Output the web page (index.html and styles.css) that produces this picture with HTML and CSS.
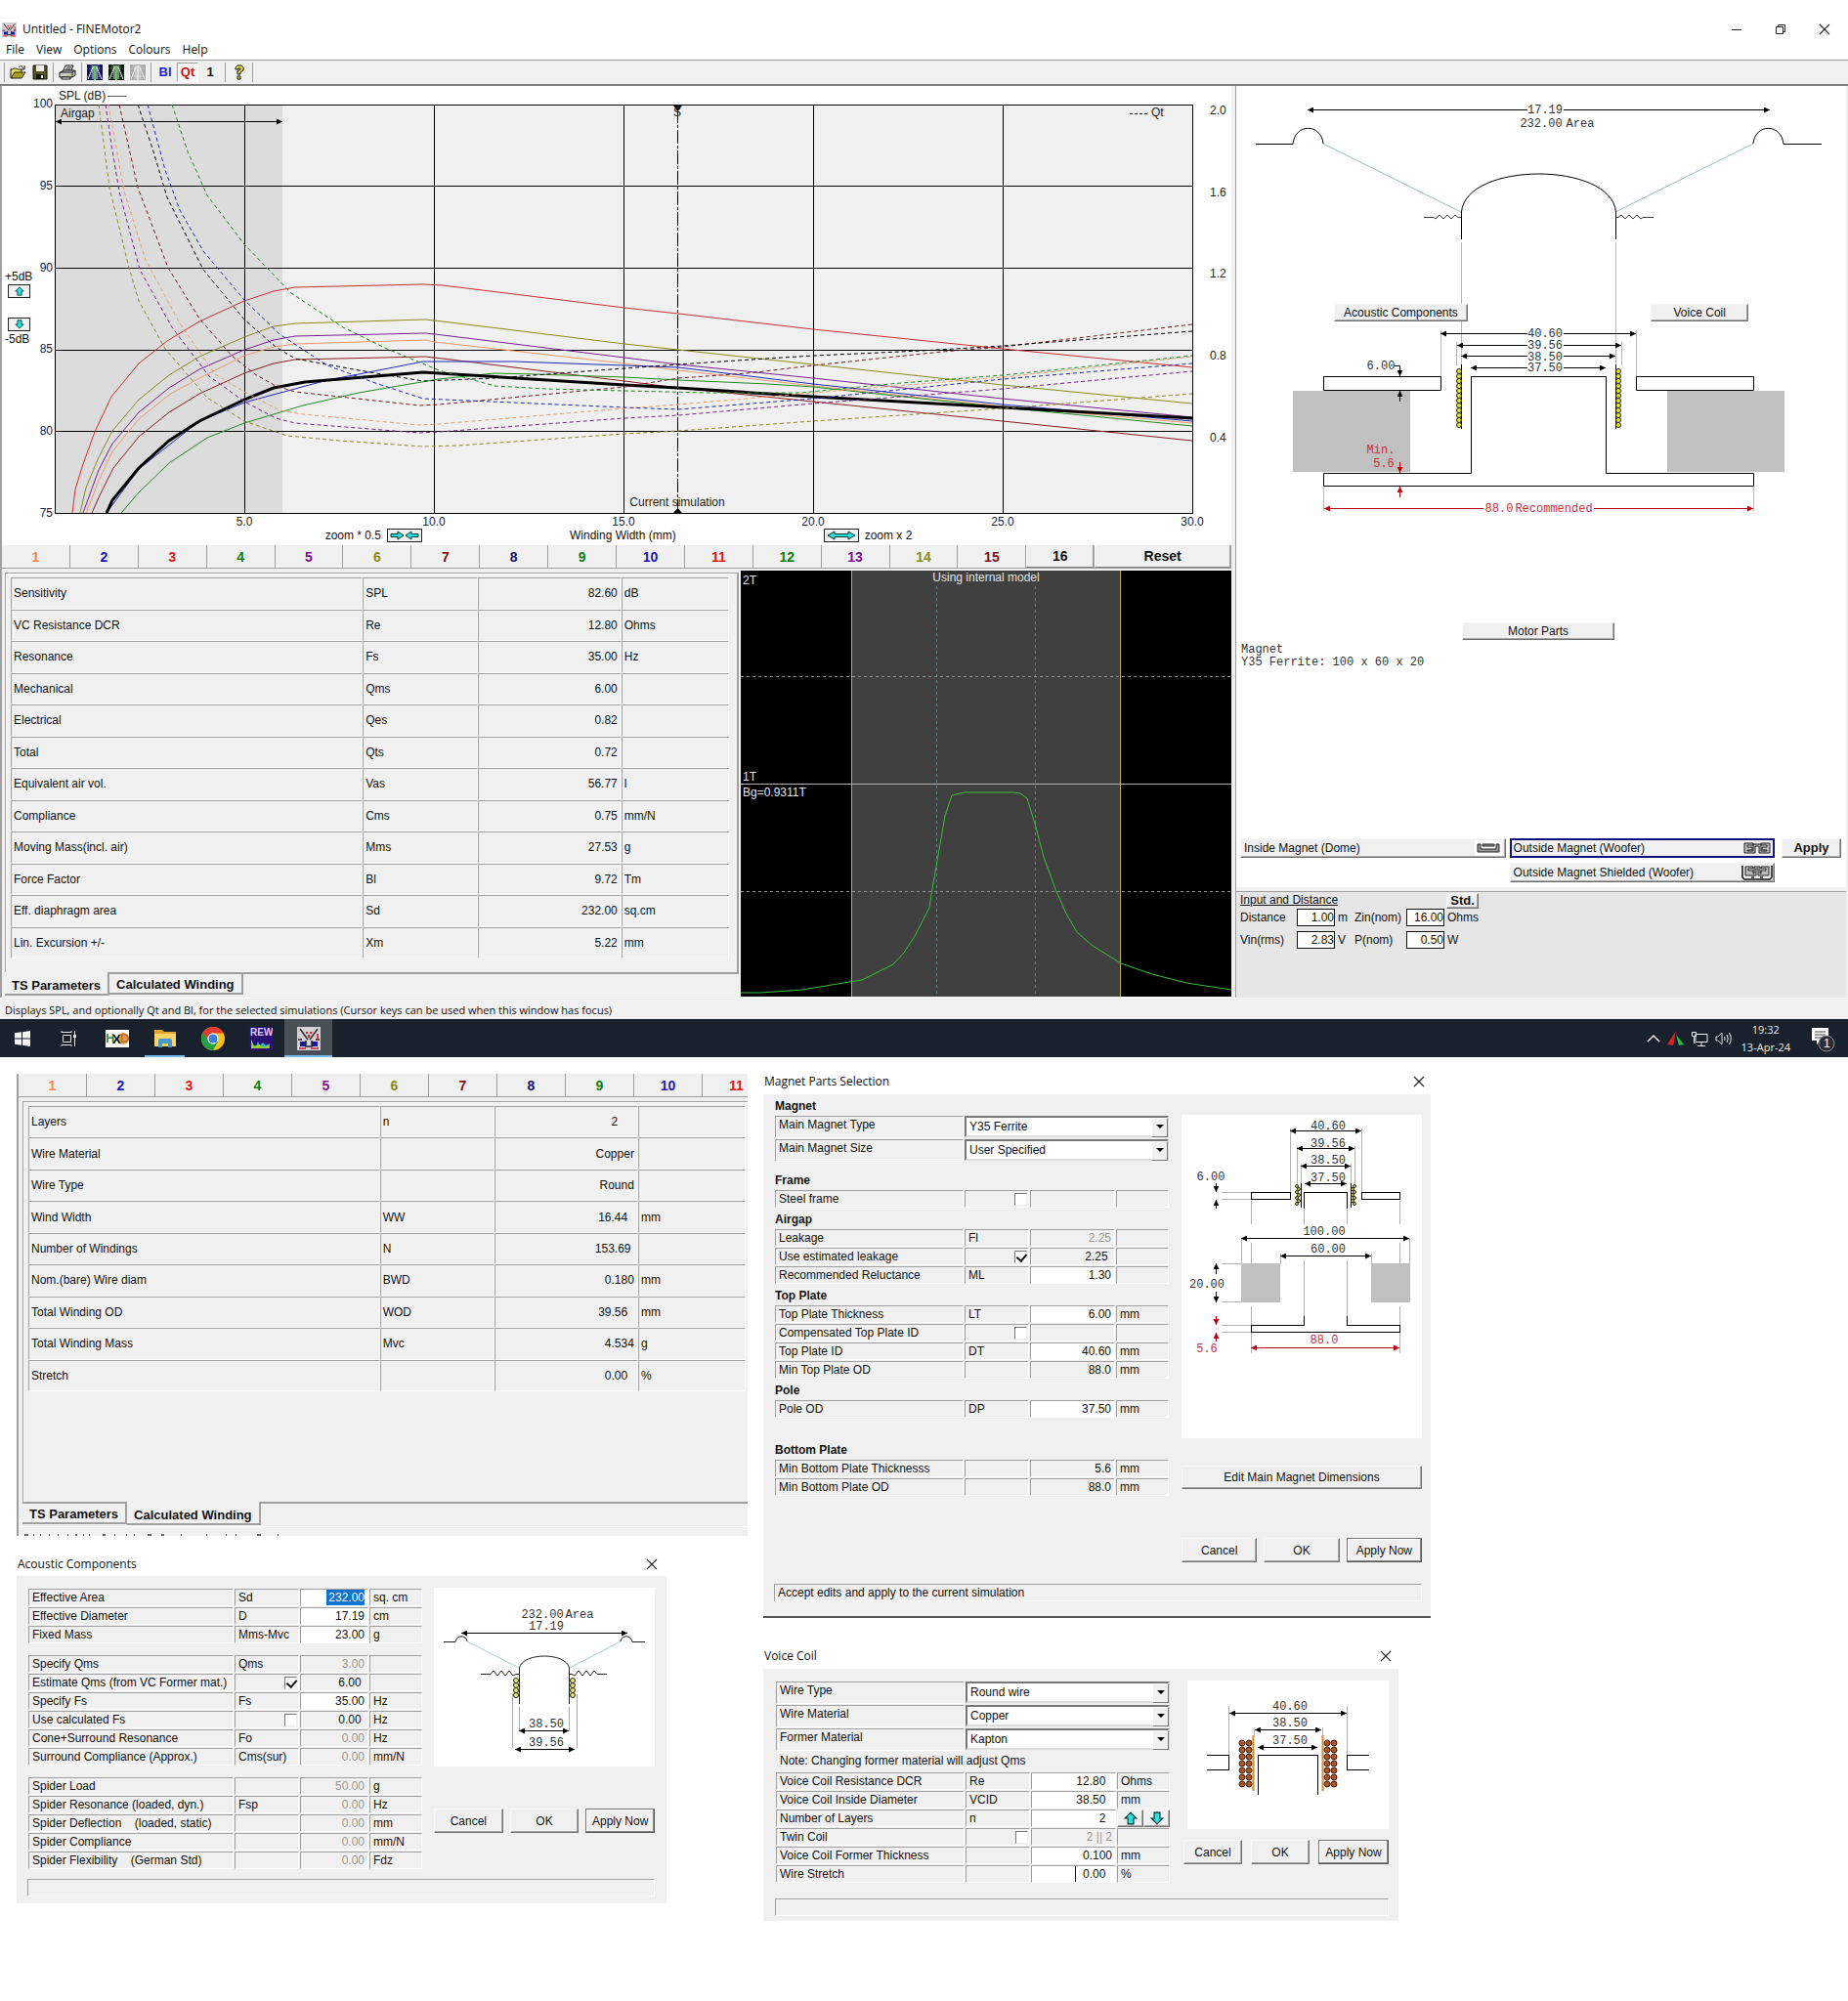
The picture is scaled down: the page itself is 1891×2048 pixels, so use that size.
FILE: index.html
```html
<!DOCTYPE html>
<html lang="en">
<head>
<meta charset="utf-8">
<meta name="viewport" content="width=device-width, initial-scale=1">
<title>Untitled - FINEMotor2</title>
<link rel="stylesheet" href="styles.css">
</head>
<body>

<svg class="defs" width="0" height="0" aria-hidden="true">
  <defs>
    <marker id="head" viewBox="0 0 6 6" refX="6" refY="3" markerWidth="6" markerHeight="6" markerUnits="userSpaceOnUse" orient="auto-start-reverse"><path d="M0 0L6 3L0 6Z" fill="#000"/></marker>
    <marker id="head-red" viewBox="0 0 6 6" refX="6" refY="3" markerWidth="6" markerHeight="6" markerUnits="userSpaceOnUse" orient="auto-start-reverse"><path d="M0 0L6 3L0 6Z" fill="#c00010"/></marker>
    <symbol id="app-icon" viewBox="0 0 24 24">
      <rect width="24" height="24" fill="#d4d0d4"/>
      <path d="M3 2L11 13M21 2L13 13" stroke="#333" stroke-width="1.6" fill="none"/>
      <path d="M9 5h2v2H9zM13 5h2v2h-2zM11 8h2v3h-2z" fill="#d02030"/>
      <path d="M3 15h6v5H3zM15 15h6v5h-6z" fill="#1818a0"/>
      <path d="M1 13h4M19 13h4M9 14V20H15V14" stroke="#223" stroke-width="1.5" fill="none"/>
      <path d="M2 22h7M14 22h8M21 7V14" stroke="#d02030" stroke-width="1.6"/>
    </symbol>
    <symbol id="arrow-up" viewBox="0 0 12 12"><path d="M6 1L11 6H8.500V11H3.500V6H1Z" fill="#28e0e0" stroke="#033" stroke-width="1"/></symbol>
    <symbol id="arrow-down" viewBox="0 0 12 12"><path d="M6 11L11 6H8.500V1H3.500V6H1Z" fill="#28e0e0" stroke="#033" stroke-width="1"/></symbol>
    <symbol id="close" viewBox="0 0 12 12"><path d="M1 1L11 11M11 1L1 11" stroke="#222" stroke-width="1.100" fill="none"/></symbol>
    <symbol id="plot-icon" viewBox="0 0 16 16">
      <path d="M0 4h16M0 12h16M4 0v16M12 0v16" stroke="currentColor" stroke-width="1" stroke-dasharray="1 1" opacity=".7"/>
      <path d="M1 15L3 10L6 3H10L13 10L15 15M6 1V15M10 1V15" stroke="#eee" fill="none"/>
      <path d="M8 1V16" stroke="currentColor" stroke-width="2"/>
    </symbol>
  </defs>
</svg>

<main class="app">
  <header class="titlebar">
    <svg class="app-icon" width="15" height="15" aria-hidden="true"><use href="#app-icon"/></svg>
    <h1>Untitled - FINEMotor2</h1>
    <div class="window-controls">
      <button type="button" aria-label="Minimize"><svg width="12" height="12"><path d="M1 6.500H11" stroke="#222"/></svg></button>
      <button type="button" aria-label="Restore"><svg width="12" height="12"><path d="M1.500 3.500H8.500V10.500H1.500ZM3.500 3.500V1.500H10.500V8.500H8.500" stroke="#222" fill="none"/></svg></button>
      <button type="button" aria-label="Close"><svg width="12" height="12"><use href="#close"/></svg></button>
    </div>
  </header>
  <nav class="menubar">
    <a href="#file">File</a><a href="#view">View</a><a href="#options">Options</a><a href="#colours">Colours</a><a href="#help">Help</a>
  </nav>
  <div class="toolbar">
    <div class="tool-group">
      <button type="button" aria-label="Open"><svg width="17" height="16"><path d="M1 14V5H3L4 4H7L8 5H12V8" fill="#e8e060" stroke="#222"/><path d="M1 14L5 8H16L12 14Z" fill="#a8a020" stroke="#222"/><path d="M9 3Q12 0 14 4M15 1V5H11" fill="none" stroke="#222"/></svg></button>
      <button type="button" aria-label="Save"><svg width="16" height="16"><path d="M1 1H15V15H1Z" fill="#555520" stroke="#111"/><path d="M4 1H12V7H4Z" fill="#eee"/><path d="M4 10H12V15H4Z" fill="#111"/><path d="M9 11H11V14H9Z" fill="#eee"/></svg></button>
    </div>
    <div class="tool-group">
      <button type="button" aria-label="Print"><svg width="18" height="16"><path d="M5 6L7 1H15L13 6" fill="#fff" stroke="#111"/><path d="M8 3H13M7 5H12" stroke="#111"/><path d="M2 8L5 6H16L14 9Z" fill="#ddd" stroke="#111"/><path d="M1 8H14V13H1ZM14 8L17 6V11L14 13" fill="#ccc" stroke="#111"/><path d="M3 13H12V15H3Z" fill="#fff" stroke="#111"/><path d="M9 11H12" stroke="#cc0"/></svg></button>
    </div>
    <div class="tool-group">
      <button type="button" aria-label="Flux plot blue"><svg class="p-blue" width="16" height="16"><use href="#plot-icon"/></svg></button>
      <button type="button" aria-label="Flux plot green"><svg class="p-green" width="16" height="16"><use href="#plot-icon"/></svg></button>
      <button type="button" aria-label="Flux plot off" disabled><svg class="p-grey" width="16" height="16"><use href="#plot-icon"/></svg></button>
    </div>
    <div class="tool-group letters">
      <button type="button" class="bl">Bl</button>
      <button type="button" class="qt" aria-pressed="true">Qt</button>
      <button type="button">1</button>
    </div>
    <div class="tool-group last">
      <button type="button" aria-label="Help"><svg width="12" height="16"><path d="M2 5V3L4 1H8L10 3V6L7 8V10H4V7L7 5V4H5V5ZM4 12H7V15H4Z" fill="#e8e030" stroke="#111"/></svg></button>
    </div>
  </div>

  <div class="workspace">
    <section class="left-pane">
      <div class="chart">
        <div class="db-shift">
          <span>+5dB</span>
          <button type="button" class="cyan-btn" aria-label="Shift up 5 dB"><svg width="10" height="10"><use href="#arrow-up"/></svg></button>
          <button type="button" class="cyan-btn" aria-label="Shift down 5 dB"><svg width="10" height="10"><use href="#arrow-down"/></svg></button>
          <span>-5dB</span>
        </div>
        <svg class="plot" viewBox="34 88 1226 452" role="img" aria-label="SPL and Qt against winding width">
          <rect x="57" y="107" width="1163" height="418" fill="#f0f0f0"/>
          <rect x="57" y="107" width="232" height="418" fill="#dcdcdc"/>
          <g stroke="#000" fill="none" shape-rendering="crispEdges">
            <path d="M56.500 107.500H1220.500V525.500H56.500ZM56.500 190.500H1220M56.500 274.500H1220M56.500 358.500H1220M56.500 441.500H1220"/>
            <path d="M250.500 107V525M444.500 107V525M638.500 107V525M832.500 107V525M1026.500 107V525"/>
            <path d="M110 98.500H129" stroke="#555"/>
            <path d="M1156 116.500H1176" stroke-dasharray="3 2"/>
            <path d="M693.500 112V522" stroke-dasharray="14 2 3 2"/>
          </g>
          <path d="M57 124.500H289" stroke="#000" marker-start="url(#head)" marker-end="url(#head)"/>
          <path d="M689 108H698L693.500 114ZM689 525H698L693.500 520Z"/>
          <g class="curves">
            <polyline stroke="#cf3030" points="74,525 77,501 85,475 97,442 114,406 142,372 171,349 204,329 250,308 280,298 302,294 433,291 453,292 639,315 694,321 832,337 1026,357 1220,376"/>
            <polyline stroke="#8a8a20" points="82,525 88,499 101,468 115,441 142,409 173,384 204,365 250,345 280,334 302,331 435,327 453,329 639,352 694,358 832,373 1026,394 1220,413"/>
            <polyline stroke="#7a2090" points="85,525 101,481 115,454 142,422 173,397 204,378 250,358 280,348 302,344 435,341 445,342 639,366 694,373 832,387 1026,408 1220,427"/>
            <polyline stroke="#ee9a68" points="88,525 101,492 115,462 142,429 173,404 204,387 250,364 280,355 302,352 435,348 445,350 639,372 694,379 832,395 1026,416 1220,433"/>
            <polyline stroke="#8a2020" points="94,525 102,507 116,479 142,447 173,422 204,403 250,382 280,372 302,368 435,365 453,367 639,390 694,397 832,411 1026,431 1220,451"/>
            <polyline stroke="#2028b8" points="109,525 142,480 204,431 250,412 335,389 367,383 433,370 526,370 639,374 694,376 832,393 1026,414 1220,431"/>
            <polyline stroke="#208a20" points="124,525 142,504 173,474 212,448 250,433 310,415 367,402 449,388 506,382 547,383 639,386 694,389 786,393 832,396 1026,417 1220,436"/>
            <polyline stroke="#000" stroke-width="3" points="109,525 115,512 142,479 173,451 204,431 250,409 280,397 312,391 433,381 449,382 639,394 694,397 832,406 1026,417 1220,428"/>
          </g>
          <g class="curves dashed">
            <polyline stroke="#8a8a20" points="101,107 112,192 132,274 142,308 169,357 212,407 250,431 294,446 347,451 433,457 469,456 639,444 694,441 832,431 1026,418 1220,403"/>
            <polyline stroke="#7a2090" points="108,107 114,148 122,196 143,276 176,335 214,385 250,411 282,428 302,433 429,443 449,442 639,428 694,425 832,413 1026,398 1220,380"/>
            <polyline stroke="#ee9a68" points="111,107 127,196 149,266 184,331 220,383 250,401 286,420 310,424 429,435 449,434 639,418 694,414 832,402 1026,386 1220,365"/>
            <polyline stroke="#7a1820" points="122,107 141,192 172,274 204,326 237,364 261,383 282,395 302,401 429,415 449,414 639,396 694,387 765,382 832,374 964,360 1026,355 1220,332"/>
            <polyline stroke="#000" points="141,107 157,155 171,202 208,276 250,327 282,355 302,367 367,379 433,390 506,387 639,377 694,373 769,368 832,364 943,359 1026,354 1220,339"/>
            <polyline stroke="#2028b8" points="151,107 169,174 184,215 208,257 250,307 286,342 335,374 384,392 433,408 639,417 694,419 832,408 1026,388 1220,372"/>
            <polyline stroke="#208a20" points="176,107 192,155 212,200 250,250 298,300 351,335 396,357 449,379 506,395 559,398 639,400 724,402 819,402 910,393 1026,384 1220,364"/>
          </g>
          <g class="svg-ui">
            <text x="60" y="102">SPL (dB)</text><text x="62" y="120">Airgap</text>
            <g text-anchor="end"><text x="54" y="110">100</text><text x="54" y="194">95</text><text x="54" y="278">90</text><text x="54" y="361">85</text><text x="54" y="445">80</text><text x="54" y="529">75</text></g>
            <text x="1238" y="117">2.0</text><text x="1238" y="201">1.6</text><text x="1238" y="284">1.2</text><text x="1238" y="368">0.8</text><text x="1238" y="452">0.4</text>
            <text x="1178" y="119">Qt</text>
            <g text-anchor="middle"><text x="693" y="119">S</text><text x="693" y="518">Current simulation</text>
            <text x="250" y="538">5.0</text><text x="444" y="538">10.0</text><text x="638" y="538">15.0</text><text x="832" y="538">20.0</text><text x="1026" y="538">25.0</text><text x="1220" y="538">30.0</text></g>
          </g>
        </svg>
      </div>
      <div class="zoom-row">
        <div><span>zoom * 0.5</span><button type="button" class="cyan-btn big" aria-label="Zoom out"><svg width="30" height="10"><path d="M1 3.500H8V1L14 5L8 9V6.500H1ZM29 3.500H22V1L16 5L22 9V6.500H29Z" fill="#28e0e0" stroke="#033"/></svg></button></div>
        <span>Winding Width (mm)</span>
        <div><button type="button" class="cyan-btn big" aria-label="Zoom in"><svg width="30" height="10"><path d="M1 5L8 1V3.500H22V1L29 5L22 9V6.500H8V9Z" fill="#28e0e0" stroke="#033"/></svg></button><span>zoom x 2</span></div>
      </div>
      <div class="sim-tabs">
        <button type="button" class="c1">1</button><button type="button" class="c2">2</button><button type="button" class="c3">3</button><button type="button" class="c4">4</button><button type="button" class="c5">5</button><button type="button" class="c6">6</button><button type="button" class="c7">7</button><button type="button" class="c8">8</button><button type="button" class="c4">9</button><button type="button" class="c2">10</button><button type="button" class="c3">11</button><button type="button" class="c4">12</button><button type="button" class="c5">13</button><button type="button" class="c6">14</button><button type="button" class="c7">15</button><button type="button" class="raised">16</button><button type="button" class="raised">Reset</button>
      </div>
      <div class="lower">
        <div class="sheet">
          <div class="sheet-body">
            <table class="params twelve">
              <colgroup><col class="w-name"><col class="w-sym"><col class="w-val"><col></colgroup>
              <tbody>
              <tr><th scope="row">Sensitivity</th><td>SPL</td><td class="num">82.60</td><td>dB</td></tr>
              <tr><th scope="row">VC Resistance DCR</th><td>Re</td><td class="num">12.80</td><td>Ohms</td></tr>
              <tr><th scope="row">Resonance</th><td>Fs</td><td class="num">35.00</td><td>Hz</td></tr>
              <tr><th scope="row">Mechanical</th><td>Qms</td><td class="num">6.00</td><td></td></tr>
              <tr><th scope="row">Electrical</th><td>Qes</td><td class="num">0.82</td><td></td></tr>
              <tr><th scope="row">Total</th><td>Qts</td><td class="num">0.72</td><td></td></tr>
              <tr><th scope="row">Equivalent air vol.</th><td>Vas</td><td class="num">56.77</td><td>l</td></tr>
              <tr><th scope="row">Compliance</th><td>Cms</td><td class="num">0.75</td><td>mm/N</td></tr>
              <tr><th scope="row">Moving Mass(incl. air)</th><td>Mms</td><td class="num">27.53</td><td>g</td></tr>
              <tr><th scope="row">Force Factor</th><td>Bl</td><td class="num">9.72</td><td>Tm</td></tr>
              <tr><th scope="row">Eff. diaphragm area</th><td>Sd</td><td class="num">232.00</td><td>sq.cm</td></tr>
              <tr><th scope="row">Lin. Excursion +/-</th><td>Xm</td><td class="num">5.22</td><td>mm</td></tr>
              </tbody>
            </table>
          </div>
          <div class="sheet-tabs">
            <button type="button" class="current">TS Parameters</button><button type="button">Calculated Winding</button>
          </div>
        </div>
        <svg class="flux" viewBox="758 584 502 436" role="img" aria-label="Flux density plot">
          <rect x="758" y="584" width="502" height="436"/>
          <rect x="871" y="584" width="276" height="436" fill="#404040"/>
          <g fill="none" shape-rendering="crispEdges">
            <path d="M871.500 584V1020M1146.500 584V1020" stroke="#b8b030"/>
            <path d="M958.500 600V1020M1059.500 600V1020" stroke="#5a8080" stroke-dasharray="3 3"/>
            <path d="M758 692.500H1260M758 912.500H1260" stroke="#8a8f8f" stroke-dasharray="3 3"/>
            <path d="M758 802.500H1260" stroke="#b0b0b0"/>
          </g>
          <polyline fill="none" stroke="#38c038" stroke-width="1" points="758,1016 778,1016 821,1013 857,1007 882,1003 914,987 925,975 936,958 951,929 954,910 958,887 967,835 974,814 987,811 1037,811 1044,812 1051,817 1059,843 1068,877 1080,910 1091,935 1102,954 1118,968 1147,986 1179,997 1214,1006 1260,1013"/>
          <g class="svg-ui light"><text x="760" y="598">2T</text><text x="1009" y="595" text-anchor="middle">Using internal model</text><text x="760" y="799">1T</text><text x="760" y="815">Bg=0.9311T</text></g>
        </svg>
      </div>
    </section>

    <section class="right-pane">
      <div class="motor">
        <div class="motor-drawing">
          <svg viewBox="1265 88 624 548" role="img" aria-label="Motor and cone cross section">
            <g fill="none" stroke="#b8b8b8" shape-rendering="crispEdges"><path d="M1495.500 248V373M1653.500 248V373M1474.500 338V385M1674.500 338V385M1490.500 350V374M1659.500 350V374M1354.500 498V523M1794.500 498V523"/></g>
            <g fill="#c0c0c0"><rect x="1323" y="400" width="120" height="83"/><rect x="1706" y="400" width="120" height="83"/></g>
            <g fill="none" stroke="#90c0c0"><path d="M1354 147L1495 217M1794 147L1653 217"/></g>
            <g fill="none" stroke="#000">
              <path d="M1285 147.500H1323C1325 126 1352 126 1354 147M1864 147.500H1825C1823 126 1796 126 1794 147"/>
              <path d="M1495.500 245V217C1500 165 1649 165 1653.500 217V245"/>
              <path d="M1457 222.500H1467L1469 224L1473 220L1477 224L1481 220L1485 224L1489 220L1492 222.500H1495M1692 222.500H1681L1679 224L1675 220L1671 224L1667 220L1663 224L1659 220L1656 222.500H1654" stroke="#444"/>
              <path d="M1354.500 385.500H1474.500V399.500H1354.500ZM1674.500 385.500H1794.500V399.500H1674.500Z" fill="#fff"/>
              <path d="M1505.500 385.500H1643.500V484.500H1794.500V497.500H1354.500V484.500H1505.500Z" fill="#fff"/>
              <path d="M1495.500 373V439M1653.500 373V439"/>
              <path d="M1427 374.500H1432.500V385" marker-end="url(#head)"/><path d="M1432.500 411V400" marker-end="url(#head)"/>
            </g>
            <g stroke="#000" fill="none">
              <path d="M1563 112.500H1338" marker-end="url(#head)"/><path d="M1600 112.500H1811" marker-end="url(#head)"/>
              <path d="M1563 341.500H1474" marker-end="url(#head)"/><path d="M1600 341.500H1674" marker-end="url(#head)"/>
              <path d="M1563 353.500H1491" marker-end="url(#head)"/><path d="M1600 353.500H1659" marker-end="url(#head)"/>
              <path d="M1563 364.500H1495" marker-end="url(#head)"/><path d="M1600 364.500H1653" marker-end="url(#head)"/>
              <path d="M1563 376.500H1505" marker-end="url(#head)"/><path d="M1600 376.500H1643" marker-end="url(#head)"/>
            </g>
            <g stroke="#c00010" fill="none">
              <path d="M1432.500 473V484" marker-end="url(#head-red)"/><path d="M1432.500 509V498" marker-end="url(#head-red)"/>
              <path d="M1518 520.500H1355" marker-end="url(#head-red)"/><path d="M1631 520.500H1794" marker-end="url(#head-red)"/>
            </g>
            <g fill="#e8e830" stroke="#222">
              <circle cx="1493" cy="380" r="2.500"/><circle cx="1493" cy="385" r="2.500"/><circle cx="1493" cy="390" r="2.500"/><circle cx="1493" cy="395" r="2.500"/><circle cx="1493" cy="400" r="2.500"/><circle cx="1493" cy="405" r="2.500"/><circle cx="1493" cy="410" r="2.500"/><circle cx="1493" cy="415" r="2.500"/><circle cx="1493" cy="420" r="2.500"/><circle cx="1493" cy="425" r="2.500"/><circle cx="1493" cy="430" r="2.500"/><circle cx="1493" cy="435" r="2.500"/>
              <circle cx="1656" cy="380" r="2.500"/><circle cx="1656" cy="385" r="2.500"/><circle cx="1656" cy="390" r="2.500"/><circle cx="1656" cy="395" r="2.500"/><circle cx="1656" cy="400" r="2.500"/><circle cx="1656" cy="405" r="2.500"/><circle cx="1656" cy="410" r="2.500"/><circle cx="1656" cy="415" r="2.500"/><circle cx="1656" cy="420" r="2.500"/><circle cx="1656" cy="425" r="2.500"/><circle cx="1656" cy="430" r="2.500"/><circle cx="1656" cy="435" r="2.500"/>
            </g>
            <g class="svg-mono" text-anchor="middle">
              <text x="1581" y="116">17.19</text><text x="1577" y="130">232.00</text><text x="1617" y="130">Area</text>
              <text x="1581" y="345">40.60</text><text x="1581" y="357">39.56</text><text x="1581" y="369">38.50</text><text x="1581" y="380">37.50</text>
              <text x="1413" y="378">6.00</text>
              <g class="red"><text x="1413" y="464">Min.</text><text x="1416" y="478">5.6</text><text x="1534" y="524">88.0</text><text x="1590" y="524">Recommended</text></g>
            </g>
          </svg>
          <button type="button" class="btn over acoustic">Acoustic Components</button>
          <button type="button" class="btn over voice">Voice Coil</button>
        </div>
        <button type="button" class="btn parts">Motor Parts</button>
        <p class="magnet-note">Magnet<br>Y35 Ferrite: 100 x 60 x 20</p>
        <div class="topology">
          <button type="button" class="btn type"><span>Inside Magnet (Dome)</span><svg width="28" height="16"><rect width="28" height="16" fill="#fff"/><path d="M3 4V12H25V4H22V9H6V4Z" fill="#999" stroke="#222"/><path d="M8 4H20V6H8Z" fill="#999" stroke="#222"/></svg></button>
          <button type="button" class="btn type chosen"><span>Outside Magnet (Woofer)</span><svg width="28" height="12"><path d="M1 1H10V3H4V5H9V8H4V9H10V2H18V9H24V8H19V5H24V3H18V1H27V11H16V4H12V11H1Z" fill="#bbb" stroke="#222"/></svg></button>
          <button type="button" class="btn apply">Apply</button>
          <button type="button" class="btn type shielded"><span>Outside Magnet Shielded (Woofer)</span><svg width="32" height="16"><path d="M1 1V13L3 15H29L31 13V1" fill="none" stroke="#111" stroke-width="1.500"/><path d="M4 2H12V4H7V6H12V9H13V2H19V9H20V6H25V4H20V2H28V11H17V4H15V11H4Z" fill="#bbb" stroke="#222"/><path d="M10 12H13V15H10ZM19 12H22V15H19Z" fill="#555"/></svg></button>
        </div>
      </div>
      <form class="input-panel">
        <div class="input-head"><h2>Input and Distance</h2><button type="button" class="btn std">Std.</button></div>
        <div class="input-grid">
          <label for="dist">Distance</label><input id="dist" value="1.00"><span>m</span><label for="zin">Zin(nom)</label><input id="zin" value="16.00"><span>Ohms</span>
          <label for="vin">Vin(rms)</label><input id="vin" value="2.83"><span>V</span><label for="pnom">P(nom)</label><input id="pnom" value="0.50"><span>W</span>
        </div>
      </form>
    </section>
  </div>
  <footer class="statusbar">Displays SPL, and optionally Qt and Bl, for the selected simulations (Cursor keys can be used when this window has focus)</footer>
</main>

<nav class="taskbar" aria-label="Taskbar">
  <button type="button" class="start" aria-label="Start"><svg width="16" height="16"><path d="M0 2.300L7 1.300V7.500H0ZM8 1.200L16 0V7.500H8ZM0 8.500H7V14.700L0 13.700ZM8 8.500H16V16L8 14.800Z" fill="#f4f4f4"/></svg></button>
  <button type="button" aria-label="Task view"><svg width="18" height="16"><path d="M1 2V0M1 1.500H11M11 0V2M2.500 4.500H10.500V11.500H2.500ZM1 16V14.500H11V16M14.500 0V16" fill="none" stroke="#e4e4e4"/><rect x="13" y="4" width="3" height="3" fill="#e4e4e4"/></svg></button>
  <button type="button" aria-label="HxD"><svg width="24" height="18"><rect width="24" height="18" fill="#fff"/><circle cx="18" cy="9" r="6" fill="#e8a050"/><g class="icon-text"><text x="0" y="13" fill="#3a8a3a">H</text><text x="7" y="14" fill="#111">X</text><text x="15" y="13" fill="#c07020">D</text></g></svg></button>
  <button type="button" class="running" aria-label="File Explorer"><svg width="22" height="20"><path d="M0 1H8L10 3H22V18H0Z" fill="#e0a830"/><path d="M0 5H22V18H0Z" fill="#fcd468"/><path d="M4 19V12Q4 10 6 10H16Q18 10 18 12V19H14V15H8V19Z" fill="#4a9ad0"/></svg></button>
  <button type="button" aria-label="Chrome"><svg width="24" height="24" viewBox="0 0 24 24"><circle cx="12" cy="12" r="12" fill="#fbc116"/><path d="M12 12L1.600 6A12 12 0 0 0 12 24L17.200 15Z" fill="#22a045"/><path d="M12 6.500H22.700L22.400 6A12 12 0 0 0 1.600 6L7 14Z" fill="#e33b2e"/><circle cx="12" cy="12" r="5.700" fill="#fff"/><circle cx="12" cy="12" r="4.500" fill="#3a7de8"/></svg></button>
  <button type="button" aria-label="REW"><svg width="24" height="24"><rect width="24" height="24" fill="#2a1070"/><g class="icon-text"><text x="1" y="9" fill="#d8ccf8" class="tiny">REW</text></g><path d="M2 22V12L4 18L7 20L9 15L11 19L14 16L17 19L21 17V22Z" fill="#30b8c0"/><path d="M2 22V14L5 20L10 18L14 21L20 19V22Z" fill="#98d030"/></svg></button>
  <button type="button" class="running active" aria-label="FINEMotor2"><svg width="24" height="24"><use href="#app-icon"/></svg></button>
  <div class="tray">
    <svg width="14" height="10"><path d="M1 8L7 2L13 8" fill="none" stroke="#eee" stroke-width="1.500"/></svg>
    <svg width="17" height="16"><path d="M9 0L6 15L0 14Z" fill="#e02020"/><path d="M9 4L17 14L12 15Z" fill="#20c040"/></svg>
    <svg width="18" height="16"><path d="M5 3.500H17V11.500H5ZM11 11.500V15M7 15.500H15M1.500 1.500H5.500V5.500H1.500ZM3.500 6V12.500H5" fill="none" stroke="#eee"/></svg>
    <svg width="18" height="16"><path d="M1 6H3L7 2V14L3 10H1Z" fill="none" stroke="#eee"/><path d="M9.500 6Q11 8 9.500 10M12 4Q14.500 8 12 12M14.500 2Q18 8 14.500 14" fill="none" stroke="#eee"/></svg>
    <div class="clock"><span>19:32</span><span>13-Apr-24</span></div>
    <svg class="note" width="26" height="28"><path d="M1 3H18V16H10L6 20V16H1Z" fill="#fff"/><path d="M4 7H15M4 10H15M4 13H12" stroke="#444"/><circle cx="16" cy="19" r="8" fill="#2a2f36" stroke="#888"/><text x="13" y="23" class="badge">1</text></svg>
  </div>
</nav>

<div class="boards">
  <div class="board-left">
    <section class="winding">
      <div class="sim-tabs clipped">
        <button type="button" class="c1">1</button><button type="button" class="c2">2</button><button type="button" class="c3">3</button><button type="button" class="c4">4</button><button type="button" class="c5">5</button><button type="button" class="c6">6</button><button type="button" class="c7">7</button><button type="button" class="c8">8</button><button type="button" class="c4">9</button><button type="button" class="c2">10</button><button type="button" class="c3">11</button>
      </div>
      <div class="sheet-body">
        <table class="params nine">
          <colgroup><col class="w-name"><col class="w-sym"><col class="w-val"><col></colgroup>
          <tbody>
          <tr><th scope="row">Layers</th><td>n</td><td class="num">2&nbsp;&nbsp;&nbsp;&nbsp;&nbsp;</td><td></td></tr>
          <tr><th scope="row">Wire Material</th><td></td><td class="num">Copper</td><td></td></tr>
          <tr><th scope="row">Wire Type</th><td></td><td class="num">Round</td><td></td></tr>
          <tr><th scope="row">Wind Width</th><td>WW</td><td class="num">16.44&nbsp;&nbsp;</td><td>mm</td></tr>
          <tr><th scope="row">Number of Windings</th><td>N</td><td class="num">153.69&nbsp;</td><td></td></tr>
          <tr><th scope="row">Nom.(bare) Wire diam</th><td>BWD</td><td class="num">0.180</td><td>mm</td></tr>
          <tr><th scope="row">Total Winding OD</th><td>WOD</td><td class="num">39.56&nbsp;&nbsp;</td><td>mm</td></tr>
          <tr><th scope="row">Total Winding Mass</th><td>Mvc</td><td class="num">4.534</td><td>g</td></tr>
          <tr><th scope="row">Stretch</th><td></td><td class="num">0.00&nbsp;&nbsp;</td><td>%</td></tr>
          </tbody>
        </table>
      </div>
      <div class="sheet-tabs">
        <button type="button">TS Parameters</button><button type="button" class="current">Calculated Winding</button>
      </div>
      <div class="cut-line"><svg width="270" height="2" aria-hidden="true"><path d="M0 1H4M9 1H10M16 1H17M25 1H26M34 1H35M44 1H45M52 1H54M60 1H61M66 1H67M80 1H83M92 1H93M104 1H105M112 1H113M126 1H130M140 1H143M160 1H161M186 1H187M206 1H207M216 1H217M238 1H242M259 1H260" stroke="#666" stroke-width="2"/></svg></div>
    </section>

    <section class="dialog acoustic-dialog">
      <header><h2>Acoustic Components</h2><button type="button" aria-label="Close"><svg width="12" height="12"><use href="#close"/></svg></button></header>
      <form class="dialog-body">
        <div class="fields">
          <table class="form">
            <colgroup><col class="a-name"><col class="a-sym"><col class="a-val"><col></colgroup>
            <tr><th><label for="sd">Effective Area</label></th><td>Sd</td><td class="edit"><input id="sd" class="marked" value="232.00"></td><td>sq. cm</td></tr>
            <tr><th><label for="dd">Effective Diameter</label></th><td>D</td><td class="edit"><input id="dd" value="17.19"></td><td>cm</td></tr>
            <tr><th><label for="fm">Fixed Mass</label></th><td>Mms-Mvc</td><td class="edit"><input id="fm" value="23.00"></td><td>g</td></tr>
          </table>
          <table class="form">
            <colgroup><col class="a-name"><col class="a-sym"><col class="a-val"><col></colgroup>
            <tr><th>Specify Qms</th><td>Qms</td><td class="num off">3.00</td><td></td></tr>
            <tr><th><label for="eq">Estimate Qms (from VC Former mat.)</label></th><td class="tick"><input type="checkbox" id="eq" checked></td><td class="num">6.00&nbsp;</td><td></td></tr>
            <tr><th><label for="fs">Specify Fs</label></th><td>Fs</td><td class="edit"><input id="fs" value="35.00"></td><td>Hz</td></tr>
            <tr><th><label for="cf">Use calculated Fs</label></th><td class="tick"><input type="checkbox" id="cf"></td><td class="num">0.00&nbsp;</td><td>Hz</td></tr>
            <tr><th>Cone+Surround Resonance</th><td>Fo</td><td class="num off">0.00</td><td>Hz</td></tr>
            <tr><th>Surround Compliance (Approx.)</th><td>Cms(sur)</td><td class="num off">0.00</td><td>mm/N</td></tr>
          </table>
          <table class="form">
            <colgroup><col class="a-name"><col class="a-sym"><col class="a-val"><col></colgroup>
            <tr><th>Spider Load</th><td></td><td class="num off">50.00</td><td>g</td></tr>
            <tr><th>Spider Resonance (loaded, dyn.)</th><td>Fsp</td><td class="num off">0.00</td><td>Hz</td></tr>
            <tr><th>Spider Deflection &nbsp;&nbsp; (loaded, static)</th><td></td><td class="num off">0.00</td><td>mm</td></tr>
            <tr><th>Spider Compliance</th><td></td><td class="num off">0.00</td><td>mm/N</td></tr>
            <tr><th>Spider Flexibility &nbsp;&nbsp; (German Std)</th><td></td><td class="num off">0.00</td><td>Fdz</td></tr>
          </table>
        </div>
        <div class="side">
          <svg viewBox="444 1625 226 183" role="img" aria-label="Cone dimensions">
            <rect x="444" y="1625" width="226" height="183" fill="#fff"/>
            <g fill="none" stroke="#a8a8a8" shape-rendering="crispEdges"><path d="M531.500 1747V1772M582.500 1747V1772M524.500 1734V1789M590.500 1734V1789"/></g>
            <path d="M478 1680L531 1707M635 1680L583 1707" stroke="#a0cccc" stroke-width="1"/>
            <g fill="none" stroke="#222">
              <path d="M454 1680.500H466C467 1673 477 1673 478 1680M660 1680.500H647C646 1673 636 1673 635 1680"/>
              <path d="M531.500 1744V1707C535 1691 579 1691 582.500 1707V1744"/>
              <path d="M492 1713.500H502L505 1710L509 1715L513 1710L517 1715L521 1710L525 1715L528 1713.500H531M621 1713.500H611L608 1710L604 1715L600 1710L596 1715L592 1710L588 1715L585 1713.500H583"/>
            </g>
            <g fill="#e8e870" stroke="#222"><circle cx="528" cy="1720" r="2.500"/><circle cx="528" cy="1725" r="2.500"/><circle cx="528" cy="1730" r="2.500"/><circle cx="528" cy="1735" r="2.500"/><circle cx="586" cy="1720" r="2.500"/><circle cx="586" cy="1725" r="2.500"/><circle cx="586" cy="1730" r="2.500"/><circle cx="586" cy="1735" r="2.500"/></g>
            <g stroke="#000" fill="none"><path d="M472 1671.500H642" marker-start="url(#head)" marker-end="url(#head)"/><path d="M531 1771.500H582" marker-start="url(#head)" marker-end="url(#head)"/><path d="M527 1790.500H588" marker-start="url(#head)" marker-end="url(#head)"/></g>
            <g class="svg-mono" text-anchor="middle"><text x="555" y="1656">232.00</text><text x="593" y="1656">Area</text><text x="559" y="1668">17.19</text><text x="559" y="1768">38.50</text><text x="559" y="1787">39.56</text></g>
          </svg>
          <div class="dialog-buttons"><button type="button" class="btn">Cancel</button><button type="button" class="btn">OK</button><button type="button" class="btn default">Apply Now</button></div>
        </div>
        <div class="hint"></div>
      </form>
    </section>
  </div>

  <div class="board-right">
    <section class="dialog magnet-dialog">
      <header><h2>Magnet Parts Selection</h2><button type="button" aria-label="Close"><svg width="12" height="12"><use href="#close"/></svg></button></header>
      <form class="dialog-body">
        <div class="fields">
          <h3>Magnet</h3>
          <table class="form tall">
            <colgroup><col class="m-name"><col></colgroup>
            <tr><th><label for="mt">Main Magnet Type</label></th><td class="pick"><span class="select"><select id="mt"><option>Y35 Ferrite</option></select></span></td></tr>
            <tr><th><label for="ms">Main Magnet Size</label></th><td class="pick"><span class="select"><select id="ms"><option>User Specified</option></select></span></td></tr>
          </table>
          <h3 class="frame-head">Frame</h3>
          <table class="form">
            <colgroup><col class="m-name"><col class="m-sym"><col class="m-val"><col></colgroup>
            <tr><th><label for="sf">Steel frame</label></th><td class="tick"><input type="checkbox" id="sf"></td><td></td><td></td></tr>
          </table>
          <h3>Airgap</h3>
          <table class="form">
            <colgroup><col class="m-name"><col class="m-sym"><col class="m-val"><col></colgroup>
            <tr><th>Leakage</th><td>Fl</td><td class="num off">2.25</td><td></td></tr>
            <tr><th><label for="ul">Use estimated leakage</label></th><td class="tick"><input type="checkbox" id="ul" checked></td><td class="num">2.25&nbsp;</td><td></td></tr>
            <tr><th><label for="rr">Recommended Reluctance</label></th><td>ML</td><td class="edit"><input id="rr" value="1.30"></td><td></td></tr>
          </table>
          <h3>Top Plate</h3>
          <table class="form">
            <colgroup><col class="m-name"><col class="m-sym"><col class="m-val"><col></colgroup>
            <tr><th><label for="lt">Top Plate Thickness</label></th><td>LT</td><td class="edit"><input id="lt" value="6.00"></td><td>mm</td></tr>
            <tr><th><label for="ct">Compensated Top Plate ID</label></th><td class="tick"><input type="checkbox" id="ct"></td><td></td><td></td></tr>
            <tr><th><label for="dt">Top Plate ID</label></th><td>DT</td><td class="edit"><input id="dt" value="40.60"></td><td>mm</td></tr>
            <tr><th>Min Top Plate OD</th><td></td><td class="num">88.0</td><td>mm</td></tr>
          </table>
          <h3>Pole</h3>
          <table class="form">
            <colgroup><col class="m-name"><col class="m-sym"><col class="m-val"><col></colgroup>
            <tr><th><label for="dp">Pole OD</label></th><td>DP</td><td class="edit"><input id="dp" value="37.50"></td><td>mm</td></tr>
          </table>
          <h3 class="bottom-head">Bottom Plate</h3>
          <table class="form">
            <colgroup><col class="m-name"><col class="m-sym"><col class="m-val"><col></colgroup>
            <tr><th>Min Bottom Plate Thicknesss</th><td></td><td class="num">5.6</td><td>mm</td></tr>
            <tr><th>Min Bottom Plate OD</th><td></td><td class="num">88.0</td><td>mm</td></tr>
          </table>
        </div>
        <div class="side">
          <svg viewBox="1209 1141 246 331" role="img" aria-label="Magnet part dimensions">
            <rect x="1209" y="1141" width="246" height="331" fill="#fff"/>
            <g fill="none" stroke="#b0b0b0" shape-rendering="crispEdges"><path d="M1320.500 1155V1220M1393.500 1155V1220M1327.500 1173V1212M1386.500 1173V1212M1331.500 1191V1211M1382.500 1191V1211M1280.500 1229V1253M1334.500 1238V1253M1378.500 1238V1253M1432.500 1229V1253M1270.500 1267V1293M1442.500 1267V1293M1310.500 1283V1293M1403.500 1283V1293M1334.500 1290V1347M1378.500 1290V1347M1280.500 1272V1293M1432.500 1272V1293M1280.500 1337V1385M1432.500 1337V1385M1250 1220.500H1280M1250 1227.500H1280M1250 1293.500H1270M1250 1332.500H1270M1250 1356.500H1280M1250 1363.500H1280"/></g>
            <g fill="#c0c0c0"><rect x="1270" y="1293" width="40" height="40"/><rect x="1403" y="1293" width="40" height="40"/></g>
            <g fill="none" stroke="#000" shape-rendering="crispEdges"><path d="M1280.500 1220.500H1320.500V1227.500H1280.500ZM1393.500 1220.500H1432.500V1227.500H1393.500ZM1334.500 1237V1220.500H1378.500V1237M1331.500 1211V1236M1382.500 1211V1236M1334.500 1347V1356.500H1280.500V1363.500H1432.500V1356.500H1378.500V1347"/></g>
            <g fill="#e8e830" stroke="#222"><circle cx="1327" cy="1214" r="1.500"/><circle cx="1329" cy="1217" r="1.500"/><circle cx="1327" cy="1220" r="1.500"/><circle cx="1329" cy="1223" r="1.500"/><circle cx="1327" cy="1226" r="1.500"/><circle cx="1329" cy="1229" r="1.500"/><circle cx="1327" cy="1232" r="1.500"/><circle cx="1386" cy="1214" r="1.500"/><circle cx="1384" cy="1217" r="1.500"/><circle cx="1386" cy="1220" r="1.500"/><circle cx="1384" cy="1223" r="1.500"/><circle cx="1386" cy="1226" r="1.500"/><circle cx="1384" cy="1229" r="1.500"/><circle cx="1386" cy="1232" r="1.500"/></g>
            <g stroke="#000" fill="none">
              <path d="M1320 1157.500H1393" marker-start="url(#head)" marker-end="url(#head)"/><path d="M1327 1175.500H1386" marker-start="url(#head)" marker-end="url(#head)"/><path d="M1331 1193.500H1382" marker-start="url(#head)" marker-end="url(#head)"/><path d="M1335 1211.500H1378" marker-start="url(#head)" marker-end="url(#head)"/><path d="M1270 1267.500H1442" marker-start="url(#head)" marker-end="url(#head)"/><path d="M1310 1285.500H1403" marker-start="url(#head)" marker-end="url(#head)"/>
              <path d="M1244.500 1211V1220" marker-end="url(#head)"/><path d="M1244.500 1237V1228" marker-end="url(#head)"/><path d="M1244.500 1304V1293" marker-end="url(#head)"/><path d="M1244.500 1322V1333" marker-end="url(#head)"/>
            </g>
            <g stroke="#c00010" fill="none"><path d="M1280 1379.500H1432" marker-start="url(#head-red)" marker-end="url(#head-red)"/><path d="M1244.500 1347V1356" marker-end="url(#head-red)"/><path d="M1244.500 1373V1364" marker-end="url(#head-red)"/></g>
            <g class="svg-mono" text-anchor="middle"><text x="1359" y="1156">40.60</text><text x="1359" y="1174">39.56</text><text x="1359" y="1191">38.50</text><text x="1359" y="1209">37.50</text><text x="1239" y="1208">6.00</text><text x="1355" y="1264">100.00</text><text x="1359" y="1282">60.00</text><text x="1235" y="1318">20.00</text><g class="red"><text x="1355" y="1375">88.0</text><text x="1235" y="1384">5.6</text></g></g>
          </svg>
          <button type="button" class="btn edit-dims">Edit Main Magnet Dimensions</button>
          <div class="dialog-buttons"><button type="button" class="btn">Cancel</button><button type="button" class="btn">OK</button><button type="button" class="btn default">Apply Now</button></div>
        </div>
        <div class="hint">Accept edits and apply to the current simulation</div>
      </form>
    </section>

    <section class="dialog coil-dialog">
      <header><h2>Voice Coil</h2><button type="button" aria-label="Close"><svg width="12" height="12"><use href="#close"/></svg></button></header>
      <form class="dialog-body">
        <div class="fields">
          <table class="form tall">
            <colgroup><col class="m-name"><col></colgroup>
            <tr><th><label for="wt">Wire Type</label></th><td class="pick"><span class="select"><select id="wt"><option>Round wire</option></select></span></td></tr>
            <tr><th><label for="wm">Wire Material</label></th><td class="pick"><span class="select"><select id="wm"><option>Copper</option></select></span></td></tr>
            <tr><th><label for="fo">Former Material</label></th><td class="pick"><span class="select"><select id="fo"><option>Kapton</option></select></span></td></tr>
          </table>
          <p>Note: Changing former material will adjust Qms</p>
          <table class="form">
            <colgroup><col class="m-name"><col class="m-sym"><col class="m-val"><col></colgroup>
            <tr><th><label for="re">Voice Coil Resistance DCR</label></th><td>Re</td><td class="edit"><input id="re" value="12.80&nbsp;&nbsp;"></td><td>Ohms</td></tr>
            <tr><th><label for="vc">Voice Coil Inside Diameter</label></th><td>VCID</td><td class="edit"><input id="vc" value="38.50&nbsp;&nbsp;"></td><td>mm</td></tr>
            <tr><th><label for="nl">Number of Layers</label></th><td>n</td><td class="edit"><input id="nl" value="2&nbsp;&nbsp;"></td><td class="spin"><div><button type="button" class="btn" aria-label="More layers"><svg width="14" height="14"><use href="#arrow-up"/></svg></button><button type="button" class="btn" aria-label="Fewer layers"><svg width="14" height="14"><use href="#arrow-down"/></svg></button></div></td></tr>
            <tr><th><label for="tc">Twin Coil</label></th><td class="tick"><input type="checkbox" id="tc"></td><td class="num off">2 || 2</td><td></td></tr>
            <tr><th><label for="ft">Voice Coil Former Thickness</label></th><td></td><td class="edit"><input id="ft" value="0.100"></td><td>mm</td></tr>
            <tr><th><label for="ws">Wire Stretch</label></th><td></td><td class="edit"><input id="ws" class="caret" value="0.00&nbsp;&nbsp;"></td><td>%</td></tr>
          </table>
        </div>
        <div class="side">
          <svg viewBox="1215 1721 206 152" role="img" aria-label="Voice coil dimensions">
            <rect x="1215" y="1721" width="206" height="152" fill="#fff"/>
            <path d="M1257.500 1747V1797M1378.500 1747V1797M1283.500 1769V1777M1353.500 1769V1777" stroke="#b0b0b0"/>
            <g fill="none" stroke="#000" shape-rendering="crispEdges"><path d="M1235 1797.500H1257.500V1812.500H1235M1401 1797.500H1378.500V1812.500H1401M1287.500 1838V1797.500H1348.500V1838"/></g>
            <path d="M1282.500 1777V1834M1353.500 1777V1834" stroke="#d88830" stroke-width="2"/>
            <g fill="#a85828" stroke="#401808">
              <circle cx="1271" cy="1785" r="3"/><circle cx="1271" cy="1792" r="3"/><circle cx="1271" cy="1799" r="3"/><circle cx="1271" cy="1806" r="3"/><circle cx="1271" cy="1813" r="3"/><circle cx="1271" cy="1820" r="3"/><circle cx="1271" cy="1827" r="3"/>
              <circle cx="1278" cy="1785" r="3"/><circle cx="1278" cy="1792" r="3"/><circle cx="1278" cy="1799" r="3"/><circle cx="1278" cy="1806" r="3"/><circle cx="1278" cy="1813" r="3"/><circle cx="1278" cy="1820" r="3"/><circle cx="1278" cy="1827" r="3"/>
              <circle cx="1358" cy="1785" r="3"/><circle cx="1358" cy="1792" r="3"/><circle cx="1358" cy="1799" r="3"/><circle cx="1358" cy="1806" r="3"/><circle cx="1358" cy="1813" r="3"/><circle cx="1358" cy="1820" r="3"/><circle cx="1358" cy="1827" r="3"/>
              <circle cx="1365" cy="1785" r="3"/><circle cx="1365" cy="1792" r="3"/><circle cx="1365" cy="1799" r="3"/><circle cx="1365" cy="1806" r="3"/><circle cx="1365" cy="1813" r="3"/><circle cx="1365" cy="1820" r="3"/><circle cx="1365" cy="1827" r="3"/>
            </g>
            <g stroke="#000" fill="none"><path d="M1258 1754.500H1378" marker-start="url(#head)" marker-end="url(#head)"/><path d="M1284 1771.500H1352" marker-start="url(#head)" marker-end="url(#head)"/><path d="M1287 1789.500H1348" marker-start="url(#head)" marker-end="url(#head)"/></g>
            <g class="svg-mono" text-anchor="middle"><text x="1320" y="1751">40.60</text><text x="1320" y="1768">38.50</text><text x="1320" y="1786">37.50</text></g>
          </svg>
          <div class="dialog-buttons"><button type="button" class="btn">Cancel</button><button type="button" class="btn">OK</button><button type="button" class="btn default">Apply Now</button></div>
        </div>
        <div class="hint"></div>
      </form>
    </section>
  </div>
</div>
</body>
</html>
```
FILE: styles.css
```css
* { box-sizing: border-box; }

:root {
  --face: #f0f0f0;
  --shade: #a0a0a0;
  --dark: #808080;
  --ui: "Liberation Sans", Arial, sans-serif;
  --system: "Open Sans", "Noto Sans", sans-serif;
  --mono: "Liberation Mono", "Courier New", monospace;
}

body {
  margin: 0;
  min-width: 1280px;
  background: #fff;
  color: #111;
  font: 12px/16px var(--ui);
}

h1, h2, h3, p { margin: 0; font-size: 12px; font-weight: 400; }
button, input, select { font: inherit; color: inherit; margin: 0; padding: 0; }
button { background: none; border: 0; }
svg { display: block; }
.defs { position: absolute; }

.svg-ui { font: 12px var(--ui); fill: #222; }
.svg-ui.light { fill: #e4e4e4; }
.svg-mono { font: 12px var(--mono); fill: #333; }
.red { fill: #c83040; }
.curves { fill: none; stroke-width: 1; }
.dashed { stroke-dasharray: 4 3; }

/* window frame */
.titlebar { display: flex; align-items: center; gap: 6px; height: 42px; padding: 18px 18px 0 2px; font-family: var(--system); }
.titlebar h1 { flex: 1; }
.window-controls { display: flex; gap: 33px; }
.menubar { display: flex; gap: 12px; height: 19px; padding: 1px 6px; font-family: var(--system); }
.menubar a { color: inherit; text-decoration: none; }

.toolbar { display: flex; align-items: center; height: 25px; border-top: 1px solid var(--shade); background: var(--face); padding-left: 4px; }
.tool-group { display: flex; align-items: center; gap: 6px; height: 20px; padding: 0 5px; border-left: 1px solid var(--shade); }
.tool-group.letters { gap: 5px; padding: 0 8px 0 7px; }
.tool-group.last { padding: 0 7px 0 8px; border-right: 1px solid var(--shade); }
.tool-group button { font-weight: 700; font-size: 13px; }
.letters button { min-width: 14px; }
.letters .bl { color: #2020d8; }
.letters .qt { color: #d01010; width: 22px; height: 20px; background: #f8f8f8; border: 1px solid var(--shade); border-right-color: #fff; border-bottom-color: #fff; }
.p-blue { background: #101060; color: #60c060; }
.p-green { background: #041804; color: #60c060; }
.p-grey { background: #aaa; color: #ddd; }

.workspace { display: grid; grid-template-columns: 1263fr 628fr; border-top: 2px solid var(--dark); background: var(--face); }
.left-pane { border-left: 2px solid var(--shade); margin-right: 3px; display: flex; flex-direction: column; }

/* SPL chart */
.chart { display: flex; background: #fff; }
.chart .plot { flex: 1; min-width: 0; }
.db-shift { width: 32px; padding: 187px 0 0 3px; display: flex; flex-direction: column; white-space: nowrap; }
.db-shift .cyan-btn { margin-left: 3px; }
.db-shift .cyan-btn + .cyan-btn { margin-top: 20px; }
.cyan-btn { width: 23px; height: 14px; display: grid; place-items: center; background: var(--face); border: 1px solid #222; }
.cyan-btn.big { width: 36px; }
.zoom-row { display: flex; justify-content: center; gap: 151px; height: 18px; padding-left: 4px; background: #fff; line-height: 16px; }
.zoom-row div { display: flex; gap: 6px; }
.zoom-row .cyan-btn { margin-top: 1px; }

/* simulation selector */
.sim-tabs { display: grid; grid-template-columns: repeat(16, 70fr) 140fr; height: 24px; background: var(--face); border-bottom: 1px solid var(--shade); font-weight: 700; font-size: 14px; }
.sim-tabs button { border-right: 1px solid var(--shade); }
.sim-tabs .raised { border-left: 1px solid #fff; border-right: 2px solid var(--shade); border-bottom: 1px solid var(--dark); }
.sim-tabs.clipped { grid-template-columns: repeat(11, 70px); overflow: hidden; }
.c1 { color: #f08848; }
.c2 { color: #1818b0; }
.c3 { color: #e01818; }
.c4 { color: #108010; }
.c5 { color: #801090; }
.c6 { color: #8a8a18; }
.c7 { color: #801018; }
.c8 { color: #101070; }

/* parameter sheet */
.lower { display: grid; grid-template-columns: 756fr 502fr; background: var(--face); padding: 2px 0 1px; }
.lower .flux { width: 100%; }
.sheet { display: flex; flex-direction: column; padding: 2px 2px 0 3px; }
.sheet-body { flex: 1; border: 1px solid var(--shade); border-width: 1px 2px 2px 1px; padding: 4px 8px 8px 5px; box-shadow: inset 1px 1px #fff; }
.params { width: 100%; table-layout: fixed; border-spacing: 0; }
.params.twelve { height: 390px; }
.params.nine { height: 292px; }
.params th, .params td { text-align: left; font-weight: 400; padding: 0 3px 0 2px; border: 1px solid; border-color: var(--shade) #fff #fff var(--shade); }
.params .num, .form .num { text-align: right; }
.w-name { width: 49%; }
.w-sym { width: 16%; }
.w-val { width: 20%; }
.sheet-tabs { display: flex; align-items: flex-start; height: 23px; font-weight: 700; font-size: 13px; }
.sheet-tabs button { height: 21px; padding: 2px 7px 0; border: 1px solid var(--shade); border-width: 0 2px 2px 0; }
.sheet-tabs .current { height: 24px; margin-top: -2px; padding-top: 5px; background: var(--face); }

/* motor view */
.right-pane { display: flex; flex-direction: column; border-left: 1px solid var(--shade); margin: 0 2px 0 1px; }
.motor { flex: 1; display: flex; flex-direction: column; background: #fff; }
.motor-drawing { position: relative; }
.motor-drawing svg { width: 100%; }
.btn { background: var(--face); border: 1px solid; border-color: #f8f8f8 #707070 #707070 #f8f8f8; box-shadow: inset -1px -1px #a8a8a8; }
.over { position: absolute; top: 223px; height: 18px; line-height: 14px; }
.acoustic { left: 16%; width: 22%; }
.voice { left: 68%; width: 16%; }
.parts { align-self: center; width: 25%; height: 18px; margin: 1px 6px 0 0; line-height: 14px; }
.magnet-note { flex: 1; padding: 4px 5px 0; font: 12px/13px var(--mono); color: #333; }
.topology { display: grid; grid-template-columns: 272fr 272fr 64fr; gap: 5px 4px; padding: 0 5px 5px 4px; }
.topology .btn { height: 20px; }
.type { display: flex; align-items: center; justify-content: space-between; padding: 0 3px; line-height: 16px; }
.type.chosen { border: 2px solid #101080; box-shadow: none; padding: 0 2px; }
.type.shielded { grid-column: 2; padding-right: 1px; }
.apply, .std { font-weight: 700; font-size: 13px; }
.apply { margin-left: 3px; }
.input-panel { height: 113px; background: #e6e6e6; border-top: 4px solid var(--face); box-shadow: inset 0 1px var(--shade); padding: 1px 0 0 4px; }
.input-head { display: flex; align-items: flex-start; height: 16px; }
.input-head h2 { width: 211px; text-decoration: underline; }
.std { width: 33px; height: 16px; margin-top: 1px; line-height: 14px; }
.input-grid { display: grid; grid-template-columns: 57px 39px 18px 52px 39px auto; grid-auto-rows: 18px; gap: 5px 1px; line-height: 18px; padding-top: 1px; }
.input-grid input { width: 39px; height: 18px; border: 1px solid #111; background: #fff; text-align: right; }
.input-grid span { padding-left: 2px; }
.statusbar { height: 22px; padding: 4px 5px 0; background: var(--face); border-top: 1px solid #fff; font-family: var(--system); font-size: 11px; line-height: 16px; white-space: nowrap; }

/* taskbar */
.taskbar { display: flex; height: 39px; background: #18212c; color: #eee; font-family: var(--system); }
.taskbar > button { width: 49px; display: grid; place-items: center; }
.taskbar > .start { width: 46px; }
.taskbar .running { border-bottom: 2px solid #76b9ed; padding-top: 2px; }
.taskbar .running:not(.active) { width: 41px; margin: 0 4px; }
.taskbar .active { background: #4a5058; }
.icon-text { font: 700 13px var(--ui); }
.icon-text .tiny { font-size: 10px; }
.tray { margin-left: auto; display: flex; align-items: center; gap: 7px; padding-right: 12px; }
.clock { display: flex; flex-direction: column; align-items: center; line-height: 18px; font-size: 11px; padding: 0 14px 0 2px; }
.badge { font: 12px var(--ui); fill: #fff; }

/* lower boards */
.boards { display: grid; grid-template-columns: minmax(0, 781fr) minmax(0, 1110fr); align-items: start; padding-bottom: 76px; }
.board-left { padding: 17px 16px 0 17px; }
.board-right { padding-top: 12px; }
.winding { height: 473px; display: flex; flex-direction: column; border-left: 2px solid var(--shade); background: var(--face); overflow: hidden; }
.winding .sheet-body { margin: 4px 0 0 4px; border-right: 0; padding: 4px 2px 0 5px; }
.winding .sheet-tabs { padding-left: 4px; }
.winding .cut-line { height: 10px; border-top: 1px solid #fff; padding: 7px 0 0 6px; }

.dialog header { display: flex; justify-content: space-between; align-items: center; height: 25px; font-family: var(--system); }
.dialog-body { display: grid; background: var(--face); }
.hint { grid-column: 1 / -1; height: 18px; padding-left: 3px; border: 1px solid; border-color: var(--shade) #fff #fff var(--shade); }
.side { display: flex; flex-direction: column; }
.side svg { width: 100%; }
.dialog-buttons { display: grid; grid-template-columns: repeat(3, 1fr); gap: 7px; }
.dialog-buttons .btn { height: 25px; }
.default { border-color: #777 #555 #555 #777; box-shadow: inset -1px -1px #888, inset 1px 1px #fff; }

.form { width: 405px; table-layout: fixed; border-spacing: 1px; }
.form th, .form td { height: 18px; padding: 0 3px; line-height: 16px; text-align: left; font-weight: 400; white-space: nowrap; border: 1px solid; border-color: var(--shade) #fff #fff var(--shade); }
.form.tall th { height: 23px; vertical-align: top; }
.form .edit { background: #fff; padding: 0 3px 0 0; text-align: right; line-height: 0; }
.form .edit input { width: 100%; height: 16px; border: 0; background: none; text-align: right; line-height: 16px; }
.form .edit .marked { width: 39px; background: #0a74d0; color: #fff; }
.form .edit .caret { width: 38px; border-left: 1px solid #111; }
.form .off { color: #999; }
.form .tick { text-align: right; line-height: 0; padding: 0 1px; }
.form .spin { padding: 0; border: 0; }
.form .spin div { display: flex; height: 18px; }
.form .spin .btn { flex: 1; display: grid; place-items: center; }
.form .pick { padding: 0; border: 0; vertical-align: top; }
.a-name { width: 210px; }
.a-sym { width: 66px; }
.a-val { width: 70px; }
.m-name { width: 193px; }
.m-sym { width: 66px; }
.m-val { width: 87px; }

input[type="checkbox"] { appearance: none; position: relative; width: 13px; height: 13px; background: #fff; border: 1px solid; border-color: #777 #eee #eee #777; vertical-align: middle; }
input[type="checkbox"]:checked::after { content: ""; position: absolute; left: 3px; top: 0; width: 5px; height: 8px; border: solid #111; border-width: 0 2px 2px 0; transform: rotate(40deg); }

.select { position: relative; display: block; height: 22px; }
.select select { appearance: none; width: 100%; height: 22px; padding: 0 3px; background: #fff; border: 2px solid; border-color: #777 #ddd #ddd #777; border-radius: 0; }
.select::before { content: ""; position: absolute; z-index: 1; right: 5px; top: 9px; border: 4px solid transparent; border-top-color: #000; border-bottom: 0; pointer-events: none; }
.select::after { content: ""; position: absolute; right: 1px; top: 2px; width: 15px; height: 18px; background: var(--face); border: 1px solid; border-color: #fff #777 #777 #fff; pointer-events: none; }

.form + .form { margin-top: 10px; }

.acoustic-dialog { width: 665px; margin-top: 16px; }
.acoustic-dialog header { padding: 0 9px 0 1px; }
.acoustic-dialog .dialog-body { grid-template-columns: 405px 226px; column-gap: 11px; row-gap: 9px; padding: 12px 11px 7px 11px; }
.acoustic-dialog .side { gap: 43px; }

.magnet-dialog header { padding: 0 6px 0 1px; height: 26px; }
.magnet-dialog { width: 683px; }
.magnet-dialog .dialog-body { grid-template-columns: 405px 246px; column-gap: 12px; padding: 4px 8px 15px 11px; height: 536px; align-content: space-between; border-bottom: 2px solid #555; }
.magnet-dialog h3 { font-weight: 700; margin: 3px 0 1px 1px; }
.magnet-dialog h3:first-child { margin-top: 0; }
.magnet-dialog .frame-head { margin-top: 10px; }
.magnet-dialog .bottom-head { margin-top: 24px; }
.magnet-dialog .side { padding-top: 17px; }
.edit-dims { height: 24px; margin: 28px 0 50px; }

.coil-dialog { width: 650px; margin-top: 26px; }
.coil-dialog header { padding: 0 7px 0 1px; height: 26px; }
.coil-dialog .dialog-body { grid-template-columns: 405px 210px; column-gap: 13px; row-gap: 15px; padding: 12px 10px 5px 12px; }
.coil-dialog .fields p { padding: 1px 5px 3px; }
.coil-dialog .side { gap: 11px; }
.coil-dialog .side svg { width: 206px; align-self: flex-end; }
.coil-dialog .dialog-buttons { grid-template-columns: 60px 60px 72px; justify-content: space-between; gap: 0; }
```
